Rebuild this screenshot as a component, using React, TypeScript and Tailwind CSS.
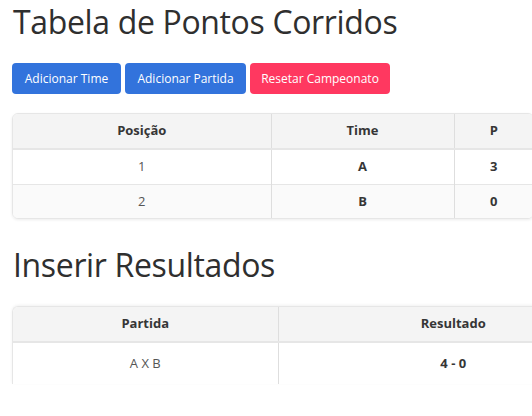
export default function App() {
  const font = { fontFamily: '"Open Sans", "Noto Sans", sans-serif' };
  return (
    <div className="w-[532px] h-[416px] overflow-hidden bg-white text-[#363636]" style={font}>
      <div className="pl-[12px] pt-[2px] w-[700px]">
        <h1 className="text-[32px] leading-[40px] tracking-[-0.35px] text-[#2f2f2f] ml-[1px]">Tabela de Pontos Corridos</h1>
        <div className="flex gap-[4px] mt-[21px]">
          <button className="h-[31px] w-[109px] rounded-[4px] bg-[#3273dc] text-white text-[12px]">Adicionar Time</button>
          <button className="h-[31px] w-[121px] rounded-[4px] bg-[#3273dc] text-white text-[12px]">Adicionar Partida</button>
          <button className="h-[31px] w-[140px] rounded-[4px] bg-[#ff3860] text-white text-[12px]">Resetar Campeonato</button>
        </div>
        <div className="mt-[19px] w-[522px] rounded-[6px] border border-[#e6e6e6] shadow-[0_1px_3px_rgba(0,0,0,0.08)] overflow-hidden">
          <table className="w-full border-collapse text-[13px] text-center">
            <thead>
              <tr className="bg-[#f4f4f4] h-[35px] border-b-2 border-[#e6e6e6]">
                <th className="w-[258px] font-bold border-r border-[#dedede]">Posição</th>
                <th className="w-[183px] font-bold border-r border-[#dedede]">Time</th>
                <th className="font-bold">P</th>
              </tr>
            </thead>
            <tbody>
              <tr className="h-[35px] border-b border-[#e6e6e6]">
                <td className="border-r border-[#dedede] text-[#555]">1</td>
                <td className="border-r border-[#dedede] font-bold">A</td>
                <td className="font-bold">3</td>
              </tr>
              <tr className="h-[34px] bg-[#fafafa]">
                <td className="border-r border-[#dedede] text-[#555]">2</td>
                <td className="border-r border-[#dedede] font-bold">B</td>
                <td className="font-bold">0</td>
              </tr>
            </tbody>
          </table>
        </div>
        <h2 className="text-[32px] leading-[40px] tracking-[-0.35px] text-[#2f2f2f] ml-[1px] mt-[26px]">Inserir Resultados</h2>
        <div className="mt-[21px] w-[616px] rounded-t-[6px] border-t border-l border-[#e6e6e6] shadow-[0_-1px_3px_rgba(0,0,0,0.06)] overflow-hidden">
          <table className="w-full border-collapse text-[13px] text-center">
            <thead>
              <tr className="bg-[#f4f4f4] h-[35px] border-b-2 border-[#e6e6e6]">
                <th className="w-[265px] font-bold border-r border-[#dedede]">Partida</th>
                <th className="font-bold">Resultado</th>
              </tr>
            </thead>
            <tbody>
              <tr className="h-[42px]">
                <td className="border-r border-[#dedede] text-[#555]">A X B</td>
                <td className="font-bold">4 - 0</td>
              </tr>
            </tbody>
          </table>
        </div>
      </div>
    </div>
  );
}
